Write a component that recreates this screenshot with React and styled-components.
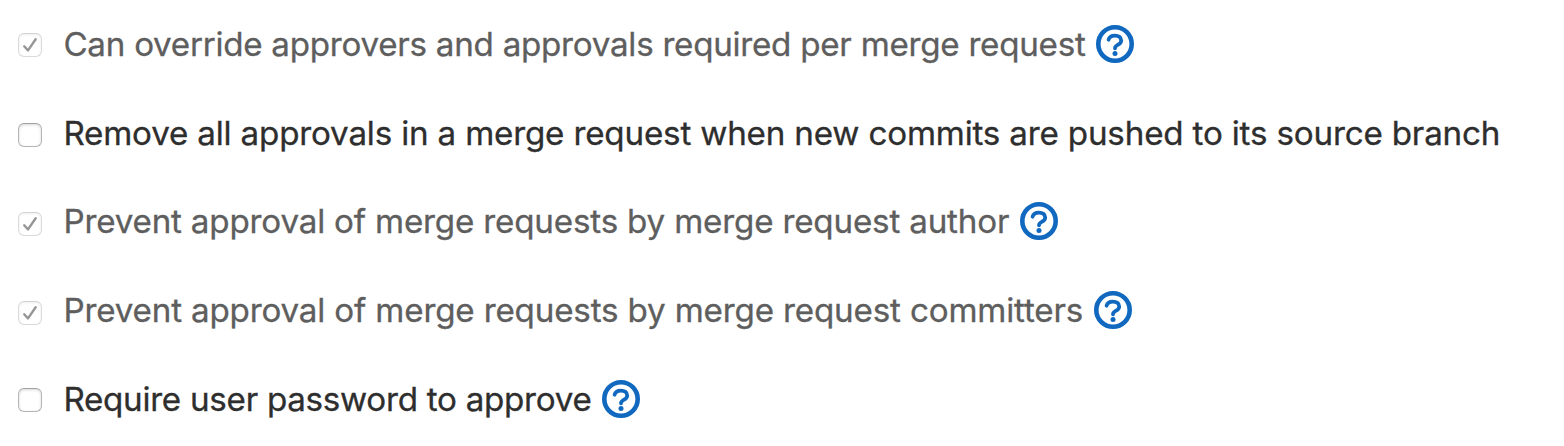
import React from "react";
import styled, { createGlobalStyle } from "styled-components";

const GlobalStyle = createGlobalStyle`
  * { box-sizing: border-box; }
  body { margin: 0; background: #fff; }
`;

const SettingsList = styled.ul`
  list-style: none;
  margin: 0;
  padding: 25px 0 0 18px;
  height: 446px;
  overflow: hidden;
  font-family: Inter, "Liberation Sans", sans-serif;
`;

const SettingRow = styled.li`
  display: flex;
  align-items: flex-start;
  height: ${({ $height }) => $height}px;
`;

const CheckboxBox = styled.span`
  flex: none;
  width: 24px;
  height: 24px;
  margin-top: ${({ $offset }) => $offset}px;
  margin-right: 21.4px;
  border: 1px solid ${({ $locked }) => ($locked ? "#dadada" : "#b5b5b5")};
  border-top-color: ${({ $locked }) => ($locked ? "#d2d2d2" : "#a2a2a2")};
  border-radius: 6px;
  background: #fff;
  box-shadow: inset 0 1px 3px ${({ $locked }) => ($locked ? "rgba(0,0,0,.07)" : "rgba(0,0,0,.16)")};
`;

const CheckMark = styled.svg`
  display: block;
  width: 22px;
  height: 22px;
`;

const LabelText = styled.span`
  font-size: 33.2px;
  line-height: 38px;
  white-space: nowrap;
  letter-spacing: ${({ $tracking }) => $tracking}px;
  -webkit-text-stroke: 0.3px currentColor;
  font-feature-settings: "calt" 0, "liga" 0;
  color: ${({ $locked }) => ($locked ? "#5e5e5e" : "#2e2e2e")};
`;

const HelpIcon = styled.svg`
  flex: none;
  width: 38px;
  height: 38px;
  margin-left: 10.6px;
`;

const settings = [
  { label: "Can override approvers and approvals required per merge request", locked: true, help: true, height: 89, offset: 8, tracking: -0.27 },
  { label: "Remove all approvals in a merge request when new commits are pushed to its source branch", height: 88, offset: 9, tracking: -0.19 },
  { label: "Prevent approval of merge requests by merge request author", locked: true, help: true, height: 89, offset: 10, tracking: -0.19 },
  { label: "Prevent approval of merge requests by merge request committers", locked: true, help: true, height: 89, offset: 10, tracking: -0.177 },
  { label: "Require user password to approve", help: true, height: 60, offset: 8, tracking: -0.28 },
];

function Help() {
  return (
    <HelpIcon viewBox="0 0 38 38" fill="none">
      <circle cx="19" cy="19" r="16.7" stroke="#1068bf" strokeWidth="4.6" />
      <path d="M12.6 14.7C13.2 11.9 15.7 10.6 18.9 10.6c3.7 0 6.3 1.8 6.3 4.8 0 2-1.1 3.2-3.1 4.3-2.1 1.2-3.1 1.8-3.1 3.6" stroke="#1068bf" strokeWidth="3.8" strokeLinecap="round" />
      <circle cx="19" cy="28.4" r="2.5" fill="#1068bf" />
    </HelpIcon>
  );
}

export default function App() {
  return (
    <>
      <GlobalStyle />
      <SettingsList>
        {settings.map(({ label, locked, help, height, offset, tracking }) => (
          <SettingRow key={label} $height={height}>
            <CheckboxBox $locked={locked} $offset={offset} role="checkbox" aria-checked={!!locked} aria-label={label}>
              {locked && (
                <CheckMark viewBox="0 0 22 22" fill="none">
                  <path d="M5.2 12.3 9 16.4 16.7 5.2" stroke="#969696" strokeWidth="2.4" strokeLinecap="round" strokeLinejoin="round" />
                </CheckMark>
              )}
            </CheckboxBox>
            <LabelText $locked={locked} $tracking={tracking}>{label}</LabelText>
            {help && <Help />}
          </SettingRow>
        ))}
      </SettingsList>
    </>
  );
}
